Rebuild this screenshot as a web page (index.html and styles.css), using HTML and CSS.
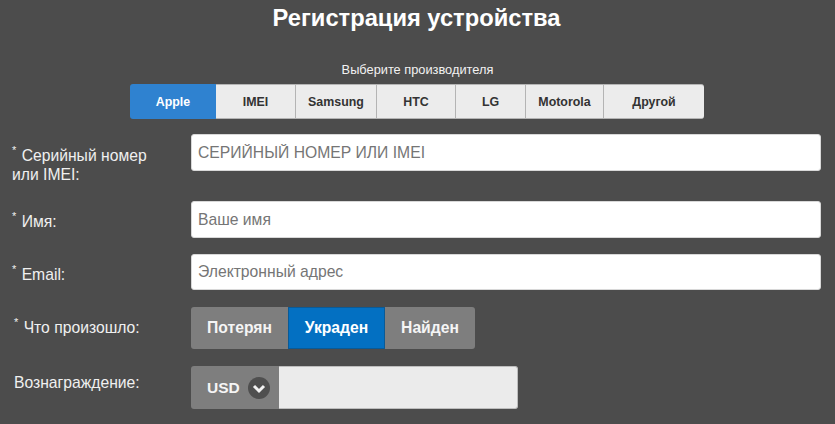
FILE: index.html
```html
<!DOCTYPE html>
<html lang="ru">
<head>
<meta charset="utf-8">
<title>Регистрация устройства</title>
<link rel="stylesheet" href="styles.css">
</head>
<body>
<main class="page">
  <h1 class="title">Регистрация устройства</h1>
  <p class="subtitle">Выберите производителя</p>
  <div class="tabs">
    <button class="tab tab-apple active">Apple</button>
    <button class="tab tab-imei">IMEI</button>
    <button class="tab tab-samsung">Samsung</button>
    <button class="tab tab-htc">HTC</button>
    <button class="tab tab-lg">LG</button>
    <button class="tab tab-motorola">Motorola</button>
    <button class="tab tab-other">Другой</button>
  </div>
  <div class="row row-serial">
    <label class="label"><sup class="req">*</sup> Серийный номер<br>или IMEI:</label>
    <input class="field" placeholder="СЕРИЙНЫЙ НОМЕР ИЛИ IMEI">
  </div>
  <div class="row row-name">
    <label class="label"><sup class="req">*</sup> Имя:</label>
    <input class="field" placeholder="Ваше имя">
  </div>
  <div class="row row-email">
    <label class="label"><sup class="req">*</sup> Email:</label>
    <input class="field" placeholder="Электронный адрес">
  </div>
  <div class="row row-status">
    <label class="label"><sup class="req">*</sup> Что произошло:</label>
    <div class="status">
      <button class="status-btn st-lost">Потерян</button>
      <button class="status-btn st-stolen active">Украден</button>
      <button class="status-btn st-found">Найден</button>
    </div>
  </div>
  <div class="row row-reward">
    <label class="label">Вознаграждение:</label>
    <div class="reward">
      <div class="currency">USD
        <svg class="chevron" width="22" height="22" viewBox="0 0 22 22" aria-hidden="true">
          <circle cx="11" cy="11" r="11" fill="#4f4f4f"/>
          <path d="M6 9 L11 14 L16 9" fill="none" stroke="#f2f2f2" stroke-width="3"/>
        </svg>
      </div>
      <div class="amount"></div>
    </div>
  </div>
</main>
</body>
</html>
```
FILE: styles.css
```css
* { box-sizing: border-box; }
html, body { margin: 0; height: 100%; }
body {
  background: #4c4c4c;
  font-family: "Liberation Sans", Arial, sans-serif;
  color: #f2f2f2;
  overflow: hidden;
}
.page { width: 835px; height: 424px; padding-top: 5px; }
.title {
  margin: 0;
  padding-right: 2px;
  text-align: center;
  font-size: 23.7px;
  line-height: 26px;
  font-weight: bold;
  color: #fff;
}
.subtitle {
  margin: 32px 0 0;
  text-align: center;
  font-size: 12.8px;
  line-height: 14px;
  color: #f2f2f2;
}
.tabs {
  display: flex;
  width: 574px;
  height: 35px;
  margin: 7px 0 0 130px;
}
.tab {
  border: 1px solid #b4b4b4;
  border-left: 0;
  background: #ececec;
  color: #333;
  font: bold 12.4px "Liberation Sans", Arial, sans-serif;
  padding: 0;
}
.tab.active {
  background: #2f82d0;
  border: 0;
  color: #fff;
  border-radius: 3px 0 0 3px;
}
.tab-apple { width: 86px; }
.tab-imei { width: 80px; }
.tab-samsung { width: 81px; }
.tab-htc { width: 79px; }
.tab-lg { width: 70px; }
.tab-motorola { width: 78px; }
.tab-other { width: 100px; border-right: 0; border-radius: 0 3px 3px 0; }
.row { display: flex; }
.label {
  display: block;
  width: 191px;
  flex: none;
  padding: 0 12px;
  font-size: 15.7px;
  line-height: 19px;
  color: #f0f0f0;
}
.req { font-size: 11px; line-height: 0; vertical-align: 7px; margin-right: 1px; }
.field {
  width: 630px;
  height: 100%;
  padding: 0 6px;
  border: 1px solid #d8d8d8;
  border-radius: 3px;
  background: #fff;
  font: 15.7px "Liberation Sans", Arial, sans-serif;
  color: #333;
  outline: 0;
}
.field::placeholder { color: #757575; opacity: 1; }
.row-serial { margin-top: 15px; height: 37px; }
.row-serial .label { padding-top: 12px; }
.row-name { margin-top: 30px; height: 37px; }
.row-name .label { padding-top: 11px; }
.row-email { margin-top: 16px; height: 36px; }
.row-email .label { padding-top: 11px; }
.row-status { margin-top: 17px; height: 42px; }
.row-status .label { padding: 11px 14px 0; }
.status { display: flex; height: 42px; }
.status-btn {
  border: 0;
  background: #7e7e7e;
  color: #f5f5f5;
  font: bold 15.7px "Liberation Sans", Arial, sans-serif;
  padding: 0;
}
.status-btn.active { background: #0370c2; color: #fff; border: 1px solid #0a5a96; }
.st-lost { width: 97px; border-radius: 3px 0 0 3px; }
.st-stolen { width: 97px; }
.st-found { width: 90px; border-radius: 0 3px 3px 0; }
.row-reward { margin-top: 17px; height: 43px; }
.row-reward .label { padding: 7px 14px 0; }
.reward { display: flex; height: 43px; }
.currency {
  display: flex;
  align-items: center;
  gap: 8px;
  width: 88px;
  padding: 0 0 0 16px;
  background: #7e7e7e;
  border-radius: 3px 0 0 3px;
  font-weight: bold;
  font-size: 15.5px;
  color: #f5f5f5;
}
.chevron { flex: none; }
.amount {
  width: 239px;
  background: #ebebeb;
  border: 1px solid #bdbdbd;
  border-left: 0;
  border-radius: 0 3px 3px 0;
}
```
